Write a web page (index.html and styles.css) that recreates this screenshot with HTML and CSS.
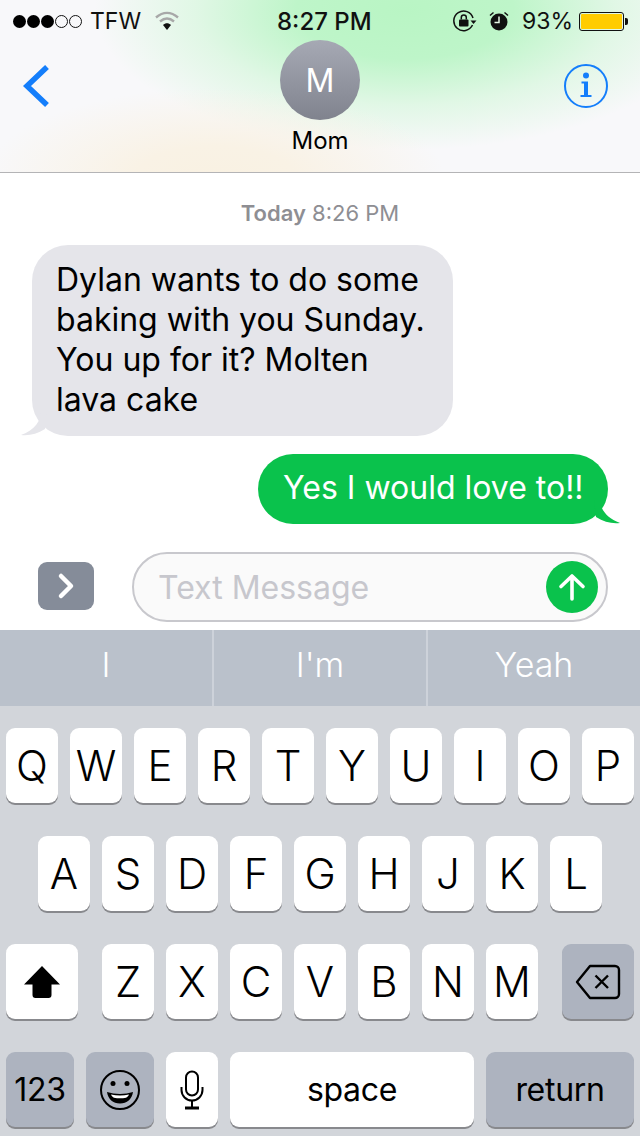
FILE: index.html
```html
<!DOCTYPE html>
<html lang="en">
<head>
<meta charset="utf-8">
<title>Messages</title>
<link rel="stylesheet" href="styles.css">
</head>
<body>
<div class="phone">
  <header class="top">
    <div class="status">
      <div class="status-left">
        <span class="signal"><i class="dot"></i><i class="dot"></i><i class="dot"></i><i class="dot off"></i><i class="dot off"></i></span>
        <span class="carrier">TFW</span>
        <svg class="wifi" width="26" height="20" viewBox="0 0 26 20"><path d="M2 6.500C9 .5 17 .5 24 6.500" fill="none" stroke="#a8a8a8" stroke-width="2.400"/><path d="M6 10.500c4.500-3.800 9.500-3.800 14 0" fill="none" stroke="#a8a8a8" stroke-width="2.400"/><path d="M9 14c2.500-2.200 5.500-2.200 8 0l-4 5z" fill="#111"/></svg>
      </div>
      <div class="time">8:27 PM</div>
      <div class="status-right">
        <svg class="lock" width="24" height="22" viewBox="0 0 24 22"><path d="M20 8A9.800 9.800 0 1 0 19.500 15" fill="none" stroke="#111" stroke-width="1.500"/><path d="M17.500 10.500h6l-3 3.500z" fill="#111"/><rect x="6" y="9.500" width="9.500" height="7" rx="1" fill="#111"/><path d="M8.300 9.500V7.500a2.500 2.500 0 0 1 5 0v2" fill="none" stroke="#111" stroke-width="1.500"/></svg>
        <svg class="alarm" width="20" height="20" viewBox="0 0 20 20"><circle cx="10" cy="11" r="8.500" fill="#111"/><path d="M10 5.500V11.500H5.500" fill="none" stroke="#e6f8e6" stroke-width="1.500"/><path d="M1 4.500 4.500 1.500M19 4.500 15.500 1.500" stroke="#111" stroke-width="1.500"/></svg>
        <span class="percent">93%</span>
        <span class="battery"><span class="battery-fill"></span></span><span class="battery-tip"></span>
      </div>
    </div>
    <div class="nav">
      <svg class="back" width="28" height="44" viewBox="0 0 28 44"><path d="M24 3 4 22l20 19" fill="none" stroke="#147efb" stroke-width="5.500"/></svg>
      <div class="contact">
        <div class="avatar">M</div>
        <div class="name">Mom</div>
      </div>
      <svg class="info" width="46" height="46" viewBox="0 0 46 46"><circle cx="23" cy="23" r="21" fill="none" stroke="#147efb" stroke-width="2"/><circle cx="23" cy="12.500" r="3" fill="#147efb"/><path d="M18.500 18.500H25V32H28.500V34H17.500V32H21V20.500H18.500Z" fill="#147efb"/></svg>
    </div>
  </header>

  <main class="thread">
    <div class="stamp"><b>Today</b> 8:26 PM</div>
    <div class="bubble in">Dylan wants to do some baking with you Sunday. You up for it? Molten lava cake
      <svg class="tail tail-in" width="26" height="24" viewBox="0 0 26 24"><path d="M20 0C20 8 14 18 0 23 8 24 16 22 24 17L26 0Z" fill="#e5e5ea"/></svg>
    </div>
    <div class="bubble out">Yes I would love to!!
      <svg class="tail tail-out" width="26" height="24" viewBox="0 0 26 24"><path d="M6 0C6 8 12 18 26 23 18 24 10 22 2 17L0 0Z" fill="#0ac24c"/></svg>
    </div>
  </main>

  <div class="composer">
    <div class="expand"><svg width="18" height="28" viewBox="0 0 18 28"><path d="M4 4 14 14 4 24" fill="none" stroke="#fff" stroke-width="4.500" stroke-linecap="round" stroke-linejoin="round"/></svg></div>
    <div class="field">
      <span class="placeholder">Text Message</span>
      <span class="send"><svg width="28" height="28" viewBox="0 0 28 28"><path d="M14 26V3M3 13.500 14 3l11 10.500" fill="none" stroke="#fff" stroke-width="3.600" stroke-linecap="round" stroke-linejoin="round"/></svg></span>
    </div>
  </div>

  <div class="suggest">
    <div class="suggestion">I</div>
    <div class="suggestion">I'm</div>
    <div class="suggestion">Yeah</div>
  </div>

  <div class="keyboard">
    <div class="row">
      <div class="key">Q</div><div class="key">W</div><div class="key">E</div><div class="key">R</div><div class="key">T</div><div class="key">Y</div><div class="key">U</div><div class="key">I</div><div class="key">O</div><div class="key">P</div>
    </div>
    <div class="row row-mid">
      <div class="key">A</div><div class="key">S</div><div class="key">D</div><div class="key">F</div><div class="key">G</div><div class="key">H</div><div class="key">J</div><div class="key">K</div><div class="key">L</div>
    </div>
    <div class="row row-split">
      <div class="key key-wide"><svg width="38" height="34" viewBox="0 0 38 34"><path d="M19 1 37 19.500H28.500V30a3 3 0 0 1-3 3h-13a3 3 0 0 1-3-3V19.500H1Z" fill="#000"/></svg></div>
      <div class="letters">
        <div class="key">Z</div><div class="key">X</div><div class="key">C</div><div class="key">V</div><div class="key">B</div><div class="key">N</div><div class="key">M</div>
      </div>
      <div class="key key-wide key-dark"><svg width="46" height="36" viewBox="0 0 46 36"><path d="M15 2H40a4 4 0 0 1 4 4V30a4 4 0 0 1-4 4H15L2 18Z" fill="none" stroke="#000" stroke-width="2.400" stroke-linejoin="round"/><path d="M20.500 11.500 33 24M33 11.500 20.500 24" stroke="#000" stroke-width="2.400"/></svg></div>
    </div>
    <div class="row row-bottom">
      <div class="key key-mode key-dark key-label">123</div>
      <div class="key key-mode key-dark"><svg width="42" height="42" viewBox="0 0 42 42"><circle cx="21" cy="21" r="19" fill="none" stroke="#000" stroke-width="2"/><circle cx="14" cy="14.500" r="2.500"/><circle cx="28" cy="14.500" r="2.500"/><path d="M8 23c8 2.500 18 2.500 26 0-1 7-6 11.500-13 11.500S9 30 8 23Z" fill="#000"/><path d="M12 25.500c6 1.200 12 1.200 18 0-.8 1.800-1.800 2.800-3 3.200-4 .8-8 .8-12 0-1.200-.4-2.200-1.400-3-3.200Z" fill="#fff"/></svg></div>
      <div class="key"><svg width="24" height="40" viewBox="0 0 24 40"><rect x="6" y="1.500" width="12" height="24" rx="6" fill="none" stroke="#000" stroke-width="2"/><path d="M1.500 17V20a10.500 10.500 0 0 0 21 0V17M12 31V37" fill="none" stroke="#000" stroke-width="2"/><path d="M5 38H19" stroke="#000" stroke-width="3"/></svg></div>
      <div class="key key-space key-label">space</div>
      <div class="key key-return key-dark key-label">return</div>
    </div>
  </div>
</div>
</body>
</html>
```
FILE: styles.css
```css
* { box-sizing: border-box; }
html, body { margin: 0; padding: 0; }
body { width: 640px; height: 1136px; overflow: hidden; background: #fff; font-family: Inter, "Liberation Sans", sans-serif; color: #000; }
.phone { display: flex; flex-direction: column; height: 1136px; }

.top {
  height: 173px;
  border-bottom: 1px solid #b4b4b6;
  background:
    radial-gradient(ellipse 230px 90px at 215px 178px, #f9f1e2 0%, #f9f2e5 35%, rgba(249,243,232,0) 100%),
    radial-gradient(ellipse 310px 140px at 405px 10px, #b9f5c4 0%, #bef5c9 35%, rgba(215,247,221,.7) 68%, rgba(240,248,242,0) 100%),
    #f8f8fa;
}
.status { height: 40px; display: grid; grid-template-columns: 277px auto 1fr; align-items: center; font-size: 23px; color: #111; padding: 2px 0 0 0; }
.status-left { display: flex; align-items: center; padding-left: 13px; }
.signal { display: flex; gap: 1px; }
.dot { width: 13px; height: 13px; border-radius: 50%; background: #000; }
.dot.off { background: transparent; border: 1.500px solid #111; }
.carrier { margin-left: 8px; }
.wifi { margin-left: 13px; }
.time { font-weight: 500; font-size: 24px; white-space: nowrap; }
.status-right { display: flex; align-items: center; justify-content: flex-end; padding-right: 12px; }
.lock { margin-right: 12px; }
.alarm { margin-right: 13px; }
.percent { margin-right: 6px; }
.battery { width: 45px; height: 19px; border: 1px solid #111; border-radius: 3px; padding: 1px; display: flex; }
.battery-fill { width: 41px; background: #ffcc00; border-radius: 1px; }
.battery-tip { width: 3px; height: 7px; background: #111; border-radius: 0 2px 2px 0; margin-left: 1px; }

.nav { display: grid; grid-template-columns: 1fr 80px 1fr; align-items: start; height: 132px; padding: 0 31px 0 23px; }
.back { margin-top: 24px; }
.info { margin-top: 23px; justify-self: end; }
.contact { grid-column: 2; display: flex; flex-direction: column; align-items: center; gap: 7px; margin-left: 4px; margin-right: -4px; }
.avatar { flex: none; width: 80px; height: 80px; border-radius: 50%; background: linear-gradient(#a6a9b4, #80838e); color: #fff; font-size: 32px; display: flex; align-items: center; justify-content: center; }
.name { font-size: 24px; line-height: 28px; }
.thread { height: 379px; display: flex; flex-direction: column; align-items: flex-start; padding-top: 28px; }
.stamp { align-self: center; font-size: 22px; line-height: 24px; color: #8e8e93; }
.stamp b { font-weight: 600; }
.bubble { position: relative; font-size: 32px; line-height: 40px; border-radius: 36px; }
.in { width: 421px; height: 191px; margin: 20px 0 0 32px; padding: 15px 24px; background: #e5e5ea; }
.out { align-self: flex-end; width: 350px; height: 70px; margin: 18px 32px 0 0; padding: 14px 25px; background: #0ac24c; color: #fff; white-space: nowrap; }
.tail { position: absolute; bottom: 0; }
.tail-in { left: -11px; }
.tail-out { right: -12px; }

.composer { height: 78px; display: flex; align-items: flex-start; padding-left: 38px; }
.expand { width: 56px; height: 48px; margin-top: 10px; border-radius: 9px; background: #858c99; display: flex; align-items: center; justify-content: center; }
.field { width: 476px; height: 70px; margin-left: 38px; border: 2px solid #c8c8cd; border-radius: 35px; background: #fafafa; display: flex; align-items: center; justify-content: space-between; padding: 0 8px 0 24px; }
.placeholder { font-size: 32px; color: #c7c7cd; }
.send { width: 52px; height: 52px; border-radius: 50%; background: #0ac24c; display: flex; align-items: center; justify-content: center; }

.suggest { height: 76px; display: grid; grid-template-columns: 214px 214px 212px; background: #bac1cb; }
.suggestion { display: flex; align-items: center; justify-content: center; font-size: 34px; font-weight: 300; color: #fff; border-right: 2px solid #cdd2da; padding-bottom: 8px; }
.suggestion:last-child { border-right: 0; }

.keyboard { flex: 1; background: #d2d5da; padding: 22px 6px 0; display: flex; flex-direction: column; gap: 33px; }
.row { display: flex; gap: 12px; }
.row-mid { justify-content: center; }
.row-split { justify-content: space-between; }
.letters { display: flex; gap: 12px; }
.key { width: 52px; height: 75px; flex: none; border-radius: 9px; background: #fff; box-shadow: 0 2px 0 #88898d; display: flex; align-items: center; justify-content: center; font-size: 42px; font-weight: 300; }
.key-wide { width: 72px; }
.key-dark { background: #adb3bf; }
.key-mode { width: 68px; }
.key-space { width: 244px; }
.key-return { width: 148px; }
.key-label { font-size: 32px; font-weight: 400; letter-spacing: -.3px; }
```
